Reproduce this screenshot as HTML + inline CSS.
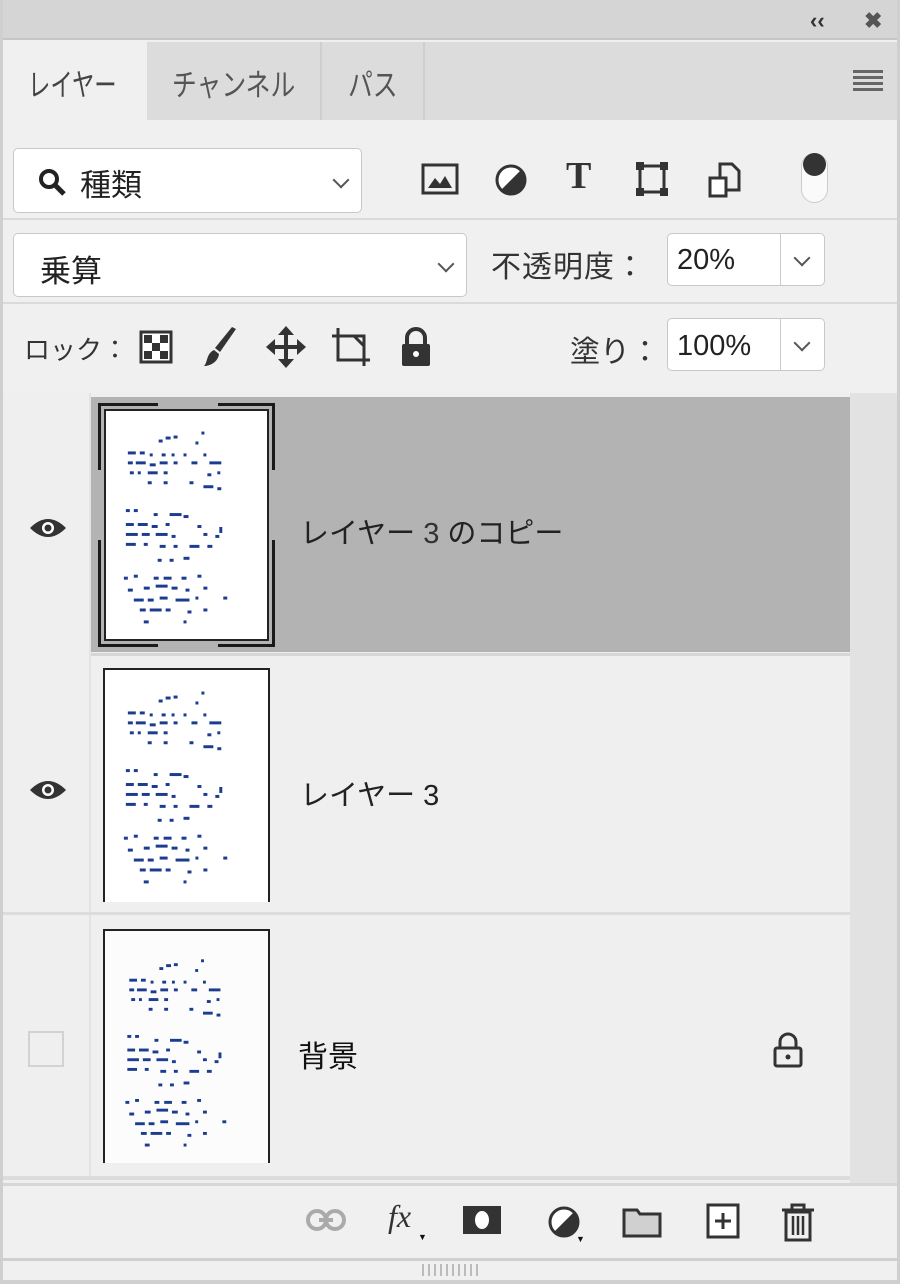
<!DOCTYPE html>
<html><head><meta charset="utf-8"><style>
*{margin:0;padding:0;box-sizing:border-box}
body{width:900px;height:1284px;background:#f0f0f0;font-family:"Liberation Sans","Noto Sans CJK JP",sans-serif;position:relative;overflow:hidden;color:#222}
.a{position:absolute}
.box{position:absolute;background:#fff;border:1px solid #c8c8c8;border-radius:5px}
.t{position:absolute;white-space:nowrap}
.sq{transform:scaleX(0.82);transform-origin:left top}
.chev{position:absolute;width:12px;height:12px;border-right:2px solid #555;border-bottom:2px solid #555;transform:rotate(45deg)}
</style></head><body>
<svg width="0" height="0" style="position:absolute">
<defs>
<symbol id="dots" viewBox="0 0 166 232">
<g fill="#1c3d8f">
<rect x="55" y="30" width="4" height="3"/><rect x="62" y="27" width="5" height="3"/><rect x="70" y="26" width="4" height="3"/><rect x="92" y="32" width="3" height="3"/><rect x="98" y="22" width="3" height="3"/>
<rect x="24" y="42" width="8" height="3"/><rect x="36" y="42" width="5" height="3"/><rect x="46" y="44" width="3" height="3"/><rect x="58" y="44" width="4" height="3"/><rect x="68" y="44" width="3" height="3"/><rect x="80" y="44" width="3" height="3"/><rect x="100" y="44" width="3" height="3"/>
<rect x="24" y="52" width="5" height="3"/><rect x="32" y="52" width="10" height="3"/><rect x="46" y="54" width="6" height="3"/><rect x="56" y="52" width="8" height="3"/><rect x="70" y="52" width="4" height="3"/><rect x="88" y="52" width="6" height="3"/><rect x="106" y="52" width="12" height="3"/>
<rect x="26" y="62" width="4" height="3"/><rect x="34" y="62" width="3" height="3"/><rect x="44" y="62" width="10" height="3"/><rect x="60" y="62" width="4" height="3"/><rect x="104" y="64" width="4" height="3"/><rect x="114" y="62" width="3" height="3"/>
<rect x="44" y="72" width="4" height="3"/><rect x="60" y="72" width="4" height="3"/><rect x="86" y="72" width="4" height="3"/><rect x="100" y="76" width="10" height="3"/><rect x="114" y="78" width="4" height="3"/>
<rect x="22" y="100" width="4" height="3"/><rect x="30" y="100" width="4" height="3"/><rect x="50" y="104" width="4" height="3"/><rect x="66" y="104" width="12" height="3"/><rect x="80" y="106" width="5" height="3"/>
<rect x="22" y="114" width="8" height="3"/><rect x="34" y="114" width="10" height="3"/><rect x="48" y="116" width="6" height="3"/><rect x="62" y="114" width="4" height="3"/><rect x="94" y="116" width="4" height="3"/><rect x="116" y="118" width="3" height="6"/>
<rect x="22" y="124" width="12" height="3"/><rect x="38" y="124" width="8" height="3"/><rect x="52" y="124" width="12" height="3"/><rect x="68" y="126" width="4" height="3"/><rect x="100" y="124" width="4" height="3"/><rect x="112" y="126" width="4" height="3"/>
<rect x="22" y="134" width="10" height="3"/><rect x="40" y="134" width="4" height="3"/><rect x="56" y="136" width="6" height="3"/><rect x="70" y="136" width="4" height="3"/><rect x="86" y="136" width="10" height="3"/><rect x="104" y="136" width="5" height="3"/>
<rect x="54" y="150" width="4" height="3"/><rect x="66" y="150" width="4" height="3"/><rect x="80" y="148" width="6" height="3"/>
<rect x="20" y="168" width="4" height="3"/><rect x="30" y="166" width="4" height="3"/><rect x="50" y="168" width="5" height="3"/><rect x="60" y="168" width="8" height="3"/><rect x="78" y="168" width="5" height="3"/><rect x="94" y="166" width="4" height="3"/>
<rect x="24" y="180" width="5" height="3"/><rect x="40" y="178" width="6" height="3"/><rect x="52" y="176" width="12" height="3"/><rect x="68" y="178" width="6" height="3"/><rect x="82" y="180" width="4" height="3"/><rect x="100" y="178" width="4" height="3"/>
<rect x="30" y="190" width="10" height="3"/><rect x="44" y="190" width="6" height="3"/><rect x="56" y="188" width="8" height="3"/><rect x="72" y="190" width="14" height="3"/><rect x="92" y="188" width="3" height="3"/><rect x="120" y="188" width="4" height="3"/>
<rect x="36" y="200" width="6" height="3"/><rect x="46" y="200" width="12" height="3"/><rect x="62" y="200" width="5" height="3"/><rect x="84" y="202" width="4" height="3"/><rect x="100" y="200" width="4" height="3"/>
<rect x="40" y="212" width="5" height="3"/><rect x="80" y="212" width="3" height="3"/>
</g></symbol>
<symbol id="eye" viewBox="0 0 40 24"><path d="M2 12 Q20 -6 38 12 Q20 30 2 12Z" fill="#333"/><circle cx="20" cy="12" r="6" fill="#fff"/><circle cx="20" cy="12" r="3.5" fill="#333"/></symbol>
</defs></svg>

<div class="a" style="left:0;top:0;width:900px;height:40px;background:#d5d5d5;border-bottom:2px solid #c6c6c6"></div>
<div class="t" style="left:810px;top:8px;font-size:22px;font-weight:bold;color:#333">‹‹</div>
<div class="t" style="left:864px;top:8px;font-size:22px;font-weight:bold;color:#555">✖</div>
<div class="a" style="left:0;top:42px;width:900px;height:78px;background:#dcdcdc"></div>
<div class="a" style="left:0;top:42px;width:147px;height:80px;background:#f0f0f0"></div>
<div class="a" style="left:320px;top:42px;width:2px;height:78px;background:#cfcfcf"></div>
<div class="a" style="left:423px;top:42px;width:2px;height:78px;background:#cfcfcf"></div>
<div class="t sq" style="left:28px;top:60px;font-size:31px;color:#444;transform:scaleX(0.72)">レイヤー</div>
<div class="t sq" style="left:172px;top:60px;font-size:31px;color:#555;transform:scaleX(0.8)">チャンネル</div>
<div class="t sq" style="left:348px;top:60px;font-size:31px;color:#555;transform:scaleX(0.8)">パス</div>
<div class="a" style="left:853px;top:70px;width:30px;height:3px;background:#666;box-shadow:0 6px 0 #666,0 12px 0 #666,0 18px 0 #666"></div>

<div class="box" style="left:13px;top:148px;width:349px;height:65px"></div>
<svg class="a" style="left:36px;top:166px" width="34" height="34" viewBox="0 0 34 34"><circle cx="13" cy="13" r="8" fill="none" stroke="#222" stroke-width="4"/><path d="M19 19 L28 28" stroke="#222" stroke-width="5"/></svg>
<div class="t" style="left:80px;top:160px;font-size:31px;color:#222">種類</div>
<div class="chev" style="left:335px;top:174px"></div>
<svg class="a" style="left:420px;top:162px" width="40" height="36" viewBox="0 0 40 36"><rect x="3" y="3" width="34" height="28" fill="none" stroke="#333" stroke-width="3"/><path d="M8 26 L15 16 L20 22 L25 14 L32 26Z" fill="#333"/></svg>
<svg class="a" style="left:493px;top:162px" width="36" height="36" viewBox="0 0 36 36"><circle cx="18" cy="18" r="14" fill="#fff" stroke="#333" stroke-width="3"/><path d="M28 8 A14 14 0 0 1 8 28Z" fill="#333"/></svg>
<div class="t" style="left:566px;top:154px;font-size:38px;font-weight:bold;font-family:'Liberation Serif',serif;color:#333">T</div>
<svg class="a" style="left:634px;top:160px" width="36" height="38" viewBox="0 0 36 38"><rect x="6" y="6" width="24" height="26" fill="none" stroke="#333" stroke-width="3"/><g fill="#333"><rect x="2" y="2" width="8" height="8"/><rect x="26" y="2" width="8" height="8"/><rect x="2" y="28" width="8" height="8"/><rect x="26" y="28" width="8" height="8"/></g></svg>
<svg class="a" style="left:706px;top:160px" width="36" height="40" viewBox="0 0 36 40"><path d="M14 4 H26 L33 11 V30 H14Z" fill="none" stroke="#333" stroke-width="3"/><rect x="4" y="18" width="16" height="18" fill="#fff" stroke="#333" stroke-width="3"/></svg>
<div class="a" style="left:801px;top:153px;width:27px;height:50px;border:1px solid #ccc;border-radius:14px;background:#fafafa"></div>
<div class="a" style="left:803px;top:153px;width:23px;height:23px;border-radius:50%;background:#333"></div>
<div class="a" style="left:0;top:218px;width:900px;height:2px;background:#dadada"></div>

<div class="box" style="left:13px;top:233px;width:454px;height:64px"></div>
<div class="t" style="left:40px;top:246px;font-size:31px;color:#222">乗算</div>
<div class="chev" style="left:440px;top:258px"></div>
<div class="t" style="left:491px;top:242px;font-size:30px;color:#333;letter-spacing:1px">不透明度：</div>
<div class="box" style="left:667px;top:233px;width:158px;height:53px"></div>
<div class="a" style="left:780px;top:234px;width:1px;height:51px;background:#ccc"></div>
<div class="t" style="left:677px;top:244px;font-size:29px;color:#222">20%</div>
<div class="chev" style="left:796px;top:252px"></div>
<div class="a" style="left:0;top:302px;width:900px;height:2px;background:#dadada"></div>

<div class="t" style="left:24px;top:330px;font-size:26px;color:#333">ロック：</div>
<svg class="a" style="left:139px;top:330px" width="34" height="34" viewBox="0 0 34 34"><rect x="2" y="2" width="30" height="30" fill="#fff" stroke="#333" stroke-width="3"/><g fill="#333"><rect x="5" y="5" width="8" height="8"/><rect x="21" y="5" width="8" height="8"/><rect x="13" y="13" width="8" height="8"/><rect x="5" y="21" width="8" height="8"/><rect x="21" y="21" width="8" height="8"/></g></svg>
<svg class="a" style="left:200px;top:326px" width="40" height="42" viewBox="0 0 40 42"><path d="M36 3 L20 26 L15 22 L32 1Z" fill="#333"/><path d="M14 24 L19 28 C18 36 10 40 4 40 C8 36 6 28 14 24Z" fill="#333"/></svg>
<svg class="a" style="left:266px;top:326px" width="40" height="42" viewBox="0 0 40 42"><path d="M20 4 V38 M4 21 H36" stroke="#333" stroke-width="4"/><path d="M20 0 L28 9 H12Z M20 42 L12 33 H28Z M0 21 L9 13 V29Z M40 21 L31 29 V13Z" fill="#333"/></svg>
<svg class="a" style="left:330px;top:326px" width="44" height="42" viewBox="0 0 44 42"><path d="M8 2 V34 H40 M2 10 H34 V40" fill="none" stroke="#333" stroke-width="3"/><path d="M24 10 L34 20" stroke="#333" stroke-width="3"/></svg>
<svg class="a" style="left:399px;top:326px" width="34" height="42" viewBox="0 0 34 42"><path d="M8 18 V12 A9 9 0 0 1 26 12 V18" fill="none" stroke="#333" stroke-width="4"/><rect x="3" y="18" width="28" height="22" rx="2" fill="#333"/><circle cx="17" cy="28" r="3" fill="#fff"/></svg>
<div class="t" style="left:570px;top:327px;font-size:30px;color:#333">塗り：</div>
<div class="box" style="left:667px;top:318px;width:158px;height:53px"></div>
<div class="a" style="left:780px;top:319px;width:1px;height:51px;background:#ccc"></div>
<div class="t" style="left:677px;top:330px;font-size:29px;color:#222">100%</div>
<div class="chev" style="left:796px;top:337px"></div>

<div class="a" style="left:0;top:393px;width:900px;height:790px;background:#efefef"></div>
<div class="a" style="left:850px;top:393px;width:48px;height:790px;background:#e2e2e2"></div>
<div class="a" style="left:89px;top:393px;width:2px;height:785px;background:#e3e3e3"></div>
<div class="a" style="left:91px;top:397px;width:759px;height:255px;background:#b3b3b3"></div>
<div class="a" style="left:98px;top:403px;width:177px;height:244px;border:3px solid #1a1a1a;background:#b3b3b3"></div>
<div class="a" style="left:158px;top:400px;width:60px;height:250px;background:#b3b3b3"></div>
<div class="a" style="left:95px;top:470px;width:186px;height:70px;background:#b3b3b3"></div>
<div class="a" style="left:104px;top:409px;width:165px;height:232px;border:2px solid #222;background:#fff"></div>
<svg class="a" style="left:104px;top:409px" width="165" height="232"><use href="#dots"/></svg>
<svg class="a" style="left:28px;top:516px" width="40" height="24"><use href="#eye"/></svg>
<div class="t" style="left:300px;top:510px;font-size:29px;color:#222">レイヤー <span style="color:#333">3</span> のコピー</div>
<div class="a" style="left:91px;top:653px;width:759px;height:3px;background:#d6d6d6"></div>
<div class="a" style="left:103px;top:668px;width:167px;height:234px;border:2px solid #222;border-bottom:none;background:#fff"></div>
<svg class="a" style="left:104px;top:669px" width="165" height="232"><use href="#dots"/></svg>
<svg class="a" style="left:28px;top:778px" width="40" height="24"><use href="#eye"/></svg>
<div class="t" style="left:300px;top:772px;font-size:29px;color:#222">レイヤー 3</div>
<div class="a" style="left:0;top:912px;width:850px;height:3px;background:#dcdcdc"></div>
<div class="a" style="left:103px;top:929px;width:167px;height:234px;border:2px solid #222;border-bottom:none;background:#fcfcfc"></div>
<svg class="a" style="left:104px;top:938px" width="165" height="225"><use href="#dots"/></svg>
<div class="a" style="left:28px;top:1031px;width:36px;height:36px;border:2px solid #d2d2d2"></div>
<div class="t" style="left:298px;top:1032px;font-size:30px;color:#111">背景</div>
<svg class="a" style="left:770px;top:1030px" width="36" height="40" viewBox="0 0 36 40"><path d="M10 18 V12 A8 8 0 0 1 26 12 V18" fill="none" stroke="#333" stroke-width="3"/><rect x="5" y="18" width="26" height="18" rx="2" fill="none" stroke="#333" stroke-width="3"/><circle cx="18" cy="27" r="2.5" fill="#333"/></svg>
<div class="a" style="left:0;top:1176px;width:850px;height:4px;background:#dcdcdc"></div>
<div class="a" style="left:0;top:1183px;width:900px;height:3px;background:#d6d6d6"></div>

<svg class="a" style="left:305px;top:1205px" width="42" height="30" viewBox="0 0 42 30"><rect x="3" y="6" width="18" height="18" rx="9" fill="none" stroke="#aaa" stroke-width="4"/><rect x="21" y="6" width="18" height="18" rx="9" fill="none" stroke="#aaa" stroke-width="4"/><path d="M14 15 H28" stroke="#aaa" stroke-width="4"/></svg>
<div class="t" style="left:388px;top:1198px;font-size:32px;font-style:italic;color:#333;font-family:'Liberation Serif',serif">fx</div>
<div class="t" style="left:418px;top:1232px;font-size:9px;color:#111">▼</div>
<svg class="a" style="left:462px;top:1204px" width="40" height="32" viewBox="0 0 40 32"><rect x="1" y="2" width="38" height="28" fill="#333"/><ellipse cx="20" cy="16" rx="7" ry="9" fill="#fff"/></svg>
<svg class="a" style="left:546px;top:1204px" width="36" height="36" viewBox="0 0 36 36"><circle cx="18" cy="18" r="14" fill="#fff" stroke="#333" stroke-width="3"/><path d="M28 8 A14 14 0 0 1 8 28Z" fill="#333"/></svg>
<div class="t" style="left:576px;top:1234px;font-size:9px;color:#111">▼</div>
<svg class="a" style="left:622px;top:1206px" width="40" height="32" viewBox="0 0 40 32"><path d="M2 4 H15 L18 8 H38 V30 H2Z" fill="#d0d0d0" stroke="#333" stroke-width="3"/></svg>
<svg class="a" style="left:705px;top:1202px" width="36" height="38" viewBox="0 0 36 38"><rect x="3" y="3" width="30" height="32" fill="#fff" stroke="#333" stroke-width="3"/><path d="M18 11 V27 M10 19 H26" stroke="#333" stroke-width="3"/></svg>
<svg class="a" style="left:780px;top:1202px" width="36" height="40" viewBox="0 0 36 40"><path d="M2 8 H34 M12 8 V3 H24 V8" fill="none" stroke="#333" stroke-width="3"/><rect x="6" y="10" width="24" height="28" fill="none" stroke="#333" stroke-width="3"/><path d="M13 14 V33 M18 14 V33 M23 14 V33" stroke="#333" stroke-width="2.5"/></svg>
<div class="a" style="left:0;top:1258px;width:900px;height:3px;background:#d0d0d0"></div>
<div class="a" style="left:0;top:1280px;width:900px;height:4px;background:#d0d0d0"></div>
<div class="a" style="left:422px;top:1264px;width:56px;height:12px;background:repeating-linear-gradient(90deg,#bbb 0 2px,transparent 2px 6px)"></div>
<div class="a" style="left:0;top:0;width:3px;height:1284px;background:#cfcfcf"></div>
<div class="a" style="left:897px;top:0;width:3px;height:1284px;background:#cfcfcf"></div>
</body></html>
